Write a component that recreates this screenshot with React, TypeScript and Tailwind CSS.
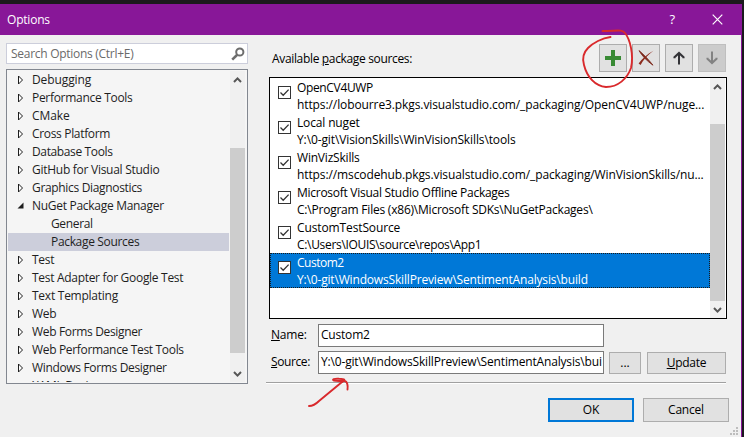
import React from "react";

type TreeItem = { label: string; kind: "closed" | "open" | "child"; selected?: boolean; tracking: string };

const tree: TreeItem[] = [
  { label: "Debugging", kind: "closed", tracking: "tracking-[-0.1px]" },
  { label: "Performance Tools", kind: "closed", tracking: "tracking-[-0.3px]" },
  { label: "CMake", kind: "closed", tracking: "tracking-[-0.1px]" },
  { label: "Cross Platform", kind: "closed", tracking: "tracking-[-0.33px]" },
  { label: "Database Tools", kind: "closed", tracking: "tracking-[-0.37px]" },
  { label: "GitHub for Visual Studio", kind: "closed", tracking: "tracking-[-0.27px]" },
  { label: "Graphics Diagnostics", kind: "closed", tracking: "tracking-[-0.33px]" },
  { label: "NuGet Package Manager", kind: "open", tracking: "tracking-[-0.29px]" },
  { label: "General", kind: "child", tracking: "tracking-[-0.35px]" },
  { label: "Package Sources", kind: "child", selected: true, tracking: "tracking-[-0.33px]" },
  { label: "Test", kind: "closed", tracking: "tracking-[-0.3px]" },
  { label: "Test Adapter for Google Test", kind: "closed", tracking: "tracking-[-0.3px]" },
  { label: "Text Templating", kind: "closed", tracking: "tracking-[-0.25px]" },
  { label: "Web", kind: "closed", tracking: "tracking-[-0.3px]" },
  { label: "Web Forms Designer", kind: "closed", tracking: "tracking-[-0.34px]" },
  { label: "Web Performance Test Tools", kind: "closed", tracking: "tracking-[-0.33px]" },
  { label: "Windows Forms Designer", kind: "closed", tracking: "tracking-[-0.34px]" },
  { label: "XAML Designer", kind: "child", tracking: "tracking-[-0.3px]" },
];

const sources = [
  { name: "OpenCV4UWP", url: "https://lobourre3.pkgs.visualstudio.com/_packaging/OpenCV4UWP/nuge...", nt: "tracking-[-0.35px]", ut: "tracking-[-0.1px]" },
  { name: "Local nuget", url: "Y:\\0-git\\VisionSkills\\WinVisionSkills\\tools", nt: "tracking-[-0.15px]", ut: "tracking-[-0.11px]" },
  { name: "WinVizSkills", url: "https://mscodehub.pkgs.visualstudio.com/_packaging/WinVisionSkills/nu...", nt: "tracking-[-0.2px]", ut: "tracking-[-0.11px]" },
  { name: "Microsoft Visual Studio Offline Packages", url: "C:\\Program Files (x86)\\Microsoft SDKs\\NuGetPackages\\", nt: "tracking-[-0.27px]", ut: "tracking-[-0.22px]" },
  { name: "CustomTestSource", url: "C:\\Users\\IOUIS\\source\\repos\\App1", nt: "tracking-[-0.12px]", ut: "tracking-[-0.32px]" },
  { name: "Custom2", url: "Y:\\0-git\\WindowsSkillPreview\\SentimentAnalysis\\build", nt: "tracking-[-0.5px]", ut: "tracking-[-0.17px]", selected: true },
];

function Chevron({ down }: { down?: boolean }) {
  return (
    <svg width="9" height="8" viewBox="0 0 9 8" className={down ? "rotate-180" : ""}>
      <path d="M1 6 L4.5 2.4 L8 6" fill="none" stroke="#555" strokeWidth="2" />
    </svg>
  );
}

function Expander({ open }: { open: boolean }) {
  return (
    <svg width="8" height="10" viewBox="0 0 8 10" className="shrink-0">
      {open ? (
        <path d="M6.5 1.5 V7.5 H0.5 Z" fill="#1e1e1e" />
      ) : (
        <path d="M1.5 1 V9 L5.5 5 Z" fill="#fff" stroke="#1e1e1e" strokeWidth="1" />
      )}
    </svg>
  );
}

function ToolButton({ disabled, children }: { disabled?: boolean; children: React.ReactNode }) {
  return (
    <div
      className={
        "flex h-7 w-7 items-center justify-center border " +
        (disabled ? "border-[#bfbfbf] bg-[#cccccc]" : "border-[#adadad] bg-[#e1e1e1]")
      }
    >
      {children}
    </div>
  );
}

function ArrowUp({ color, down }: { color: string; down?: boolean }) {
  return (
    <svg width="12" height="14" viewBox="0 0 12 14" className={down ? "rotate-180" : ""}>
      <path d="M6 13.5 V2" stroke={color} strokeWidth="2" fill="none" />
      <path d="M1.5 7.2 V6.2 L6 2 L10.5 6.2 V7.2" stroke={color} strokeWidth="2.1" fill="none" />
    </svg>
  );
}

export default function App() {
  return (
    <div className="relative flex h-[437px] w-[744px] flex-col overflow-hidden bg-[#1b1a1d] pt-1 font-['Open_Sans','Noto_Sans',sans-serif] text-[12px] text-[#1e1e1e]">
      <div className="flex w-[742px] grow flex-col border-r border-[#881798] bg-[#f0f0f0]">
        <header className="flex h-[31px] shrink-0 items-center bg-[#881798] pl-[7px] text-white">
          <span className="grow tracking-[-0.2px]">Options</span>
          <span className="mr-[37px] text-[13px]">?</span>
          <svg width="11" height="11" viewBox="0 0 11 11" className="mr-[18px]">
            <path d="M0.7 0.7 L10.3 10.3 M10.3 0.7 L0.7 10.3" stroke="#fff" strokeWidth="1.2" />
          </svg>
        </header>

        <div className="flex">
          <aside className="ml-1.5 w-[242px] shrink-0 pt-2">
            <div className="flex h-[21px] items-center border border-[#cccedb] bg-white pl-1 text-[#6a6a6a]">
              <span className="grow tracking-[-0.28px]">Search Options (Ctrl+E)</span>
              <svg width="14" height="14" viewBox="0 0 14 14" className="mr-[2px]">
                <circle cx="8.8" cy="5" r="3.6" fill="none" stroke="#6d6d6d" strokeWidth="2" />
                <path d="M6.2 7.8 L1.2 12.6" stroke="#6d6d6d" strokeWidth="2.6" />
              </svg>
            </div>

            <div className="mt-[5px] flex h-[315px] border border-[#828790] bg-[#f5f5f5] pt-px pr-[2px] pb-px pl-px">
              <ul className="h-[311px] w-[221px] overflow-hidden">
                {tree.map((t) => (
                  <li
                    key={t.label}
                    className={
                      "flex h-[18px] items-center leading-[18px] whitespace-nowrap " +
                      (t.selected ? "bg-[#cccedb] " : "") +
                      (t.kind === "child" && t.label !== "XAML Designer" ? "pl-[43px]" : t.kind === "child" ? "pl-6" : "pl-[9px]")
                    }
                  >
                    {t.kind !== "child" && (
                      <span className="mr-[7px] flex">
                        <Expander open={t.kind === "open"} />
                      </span>
                    )}
                    <span className={t.tracking}>{t.label}</span>
                  </li>
                ))}
              </ul>
              <div className="ml-px flex w-[15px] flex-col items-center justify-between bg-[#f0f0f0] pt-[5px] pb-1">
                <Chevron />
                <div className="mt-[64px] mb-auto h-[205px] w-[15px] shrink-0 bg-[#cdcdcd]" />
                <Chevron down />
              </div>
            </div>
          </aside>

          <main className="ml-[18px] w-[462px] pt-[9px]">
            <div className="flex h-7 pl-1.5">
              <div className="w-[327px] pt-1.5 leading-[18px] text-black">
                <span className="tracking-[-0.34px]">
                  Available <u>p</u>ackage sources:
                </span>
              </div>
              <div className="flex gap-[5px]">
                <ToolButton>
                  <svg width="16" height="16" viewBox="0 0 16 16">
                    <path d="M6 0 H10 V6 H16 V10 H10 V16 H6 V10 H0 V6 H6 Z" fill="#388a34" />
                  </svg>
                </ToolButton>
                <ToolButton>
                  <svg width="16" height="16" viewBox="0 0 16 16">
                    <path d="M1 0.6 C5 4 10 9 15 15.2 C9 11 4 6 1 0.6 Z" fill="#7d2a1d" stroke="#7d2a1d" strokeWidth="0.9" />
                    <path d="M15.4 0.8 C10 5 5 10 2.6 15 L0.6 13.6 C4 9 9 4 15.4 0.8 Z" fill="#8c2b1d" />
                  </svg>
                </ToolButton>
                <ToolButton>
                  <ArrowUp color="#333337" />
                </ToolButton>
                <ToolButton disabled>
                  <ArrowUp color="#838383" down />
                </ToolButton>
              </div>
            </div>

            <div className="mt-[5px] ml-[3px] flex h-[242px] w-[458px] border border-black bg-white pr-px text-black">
              <ul className="w-[440px]">
                {sources.map((s) => (
                  <li
                    key={s.name}
                    className={
                      "flex h-[35px] border border-dotted pl-[7px] whitespace-nowrap " +
                      (s.selected ? "border-[#1a1a1a] bg-[#0078d7] text-white" : "border-transparent")
                    }
                  >
                    <svg width="13" height="13" viewBox="0 0 13 13" className="mt-[7px] shrink-0">
                      <rect x="0.5" y="0.5" width="12" height="12" fill="#fff" stroke="#333" />
                      <path d="M2.5 6.5 L5.2 9.2 L10.6 3.6" fill="none" stroke="#333" strokeWidth="1.3" />
                    </svg>
                    <div className="ml-[6px] flex flex-col leading-[17px]">
                      <span className={s.nt}>{s.name}</span>
                      <span className={s.ut}>{s.url}</span>
                    </div>
                  </li>
                ))}
              </ul>
              <div className="flex w-[15px] flex-col items-center bg-[#f0f0f0] pt-[5px] pb-1">
                <Chevron />
                <div className="mt-[33px] mb-auto h-[177px] w-[15px] shrink-0 bg-[#cdcdcd]" />
                <Chevron down />
              </div>
            </div>

            <div className="mt-[5px] flex h-[23px] pl-[5px] text-black">
              <label className="w-[47px] pt-[2px] tracking-[-0.2px]">
                <u>N</u>ame:
              </label>
              <div className="w-[286px] border border-[#7a7a7a] bg-white pl-[2px] leading-[20px] tracking-[-0.2px]">Custom2</div>
            </div>
            <div className="mt-1 flex h-[23px] pl-[5px] text-black">
              <label className="w-[47px] pt-[2px] tracking-[-0.4px]">
                <u>S</u>ource:
              </label>
              <div className="w-[286px] overflow-hidden border border-[#7a7a7a] bg-white pl-[2px] leading-[20px] tracking-[-0.17px] whitespace-nowrap">
                Y:\0-git\WindowsSkillPreview\SentimentAnalysis\bui
              </div>
              <div className="mt-px ml-[5px] w-8 border border-[#adadad] bg-[#e1e1e1] text-center leading-[19px]">...</div>
              <div className="mt-px ml-[6px] w-[79px] border border-[#adadad] bg-[#e1e1e1] text-center leading-[20px] tracking-[-0.25px]">
                <u>U</u>pdate
              </div>
            </div>
            <div className="mt-2 h-[2px] w-[460px] border-t border-[#a0a0a0] bg-white" />
          </main>
        </div>

        <footer className="mt-[14px] flex h-6 justify-end gap-[9px] pr-3 text-black">
          <div className="w-[86px] border-2 border-[#0078d7] bg-[#e1e1e1] text-center leading-[20px]">OK</div>
          <div className="w-[86px] border border-[#adadad] bg-[#e1e1e1] text-center leading-[22px] tracking-[-0.2px]">Cancel</div>
        </footer>
        <div className="mt-[5px] flex justify-end pr-[3px]">
          <svg width="8" height="8" viewBox="0 0 8 8" fill="#bdbdbd">
            <path d="M6 0h2v2h-2z M3 3h2v2h-2z M6 3h2v2h-2z M0 6h2v2h-2z M3 6h2v2h-2z M6 6h2v2h-2z" />
          </svg>
        </div>
      </div>

      {/* Hand-drawn marks over the dialog */}
      <svg width="744" height="437" viewBox="0 0 744 437" className="pointer-events-none absolute inset-0" fill="none" stroke="#d9292c" strokeWidth="1.9" strokeLinecap="round" strokeLinejoin="round">
        <path d="M610.5 37 C602 38 593 43 588 48 C583 53 582.5 60 584 65 C587 77 595 86 606 87 C618 87 627 79 631 68 C634 55 630 39 625 33 C622 29 617 31 602.5 31" />
        <path d="M309 406 C313 406 315 405 319 401 L342 382" />
        <path d="M342 382 C346 380 345 379 339 378.800 C334 378.500 331.500 379.500 334 380.500 C338 381.500 343 380.500 345 381 C347.500 382 348 385 347.500 389.500" />
      </svg>
    </div>
  );
}
